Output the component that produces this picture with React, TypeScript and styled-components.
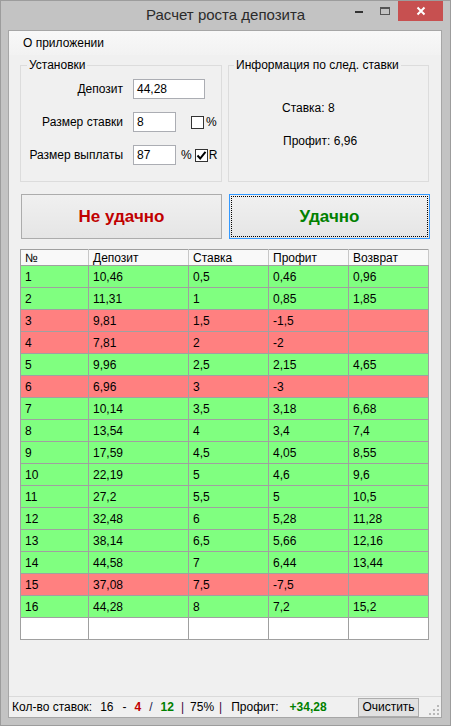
import React from 'react';
import styled, { createGlobalStyle } from 'styled-components';

const GlobalStyle = createGlobalStyle`
  html, body {
    margin: 0;
    padding: 0;
  }
  body {
    font-family: "Liberation Sans", Arial, sans-serif;
    font-size: 12px;
    color: #000;
    background: #c2c2c2;
  }
`;

const Window = styled.div`
  width: 451px;
  height: 726px;
  box-sizing: border-box;
  border: 1px solid #9c9c9c;
  background: #c3c3c3;
  display: flex;
  flex-direction: column;
`;

const TitleBar = styled.div`
  height: 29px;
  display: grid;
  grid-template-columns: 1fr auto 1fr;
  align-items: start;
`;

const Title = styled.div`
  grid-column: 2;
  font-size: 15px;
  color: #2b2b2b;
  line-height: 28px;
`;

const Caption = styled.div`
  grid-column: 3;
  justify-self: end;
  display: flex;
  margin-right: 7px;
`;

const CaptionButton = styled.div<{ $close?: boolean }>`
  width: ${(p) => (p.$close ? 45 : 26)}px;
  height: 20px;
  display: flex;
  align-items: center;
  justify-content: center;
  background: ${(p) => (p.$close ? '#c75050' : 'transparent')};
`;

const Client = styled.div`
  flex: 1;
  min-width: 0;
  margin: 0 8px 7px 7px;
  border: 1px solid #a6a6a6;
  background: #f0f0f0;
  display: flex;
  flex-direction: column;
`;

const MenuBar = styled.div`
  height: 24px;
  background: linear-gradient(#f8f8f8, #f2f2f2);
  padding-left: 14px;
  display: flex;
  align-items: center;
`;

const Body = styled.div`
  flex: 1;
  padding: 3px 0 0 11px;
  display: flex;
  flex-direction: column;
`;

const TopRow = styled.div`
  display: flex;
  gap: 6px;
`;

const Group = styled.fieldset<{ $w: number }>`
  margin: 0;
  width: ${(p) => p.$w}px;
  height: 124px;
  box-sizing: border-box;
  border: 1px solid #dcdcdc;
  padding: 7px 0 0 0;
  display: flex;
  flex-direction: column;
`;

const Legend = styled.legend<{ $ml: number }>`
  font-size: 12px;
  line-height: 14px;
  padding: 0 2px;
  margin-left: ${(p) => p.$ml}px;
  color: #000;
`;

const FieldRow = styled.div`
  display: flex;
  align-items: center;
  height: 20px;
  margin-bottom: 13px;
`;

const FieldLabel = styled.label`
  width: 102px;
  text-align: right;
  margin-right: 10px;
`;

const TextBox = styled.div<{ $w: number }>`
  width: ${(p) => p.$w}px;
  height: 20px;
  box-sizing: border-box;
  border: 1px solid #abadb3;
  background: #fff;
  padding-left: 3px;
  display: flex;
  align-items: center;
`;

const Suffix = styled.span<{ $ml: number }>`
  margin-left: ${(p) => p.$ml}px;
`;

const Check = styled.span<{ $ml: number }>`
  margin-left: ${(p) => p.$ml}px;
  width: 13px;
  height: 13px;
  box-sizing: border-box;
  border: 1px solid #333;
  background: #fff;
  display: inline-flex;
  align-items: center;
  justify-content: center;
`;

const InfoLine = styled.div<{ $mt: number; $ml: number }>`
  margin-top: ${(p) => p.$mt}px;
  margin-left: ${(p) => p.$ml}px;
  line-height: 14px;
`;

const ButtonRow = styled.div`
  display: flex;
  gap: 7px;
  margin: 12px 0 0 1px;
`;

const BigButton = styled.button<{ $color: string; $focused?: boolean }>`
  width: 201px;
  height: 45px;
  box-sizing: border-box;
  border: 1px solid ${(p) => (p.$focused ? '#3399ff' : '#acacac')};
  background: linear-gradient(#f0f0f0, #e5e5e5);
  font-family: "Liberation Sans", Arial, sans-serif;
  font-size: 17px;
  font-weight: bold;
  color: ${(p) => p.$color};
  padding: 0;
  display: flex;
  align-items: center;
  justify-content: center;
  outline: ${(p) => (p.$focused ? '1px dotted #000' : 'none')};
  outline-offset: -3px;
`;

const Grid = styled.table`
  margin-top: 10px;
  width: 409px;
  border-collapse: collapse;
  table-layout: fixed;
  border: 1px solid #a0a0a0;
`;

const HeadCell = styled.th`
  box-sizing: border-box;
  height: 16px;
  padding: 0 0 0 4px;
  text-align: left;
  font-weight: normal;
  background: #f9f9f9;
  border-right: 1px solid #c8c8c8;
  border-bottom: 1px solid #a0a0a0;
  white-space: nowrap;
  overflow: hidden;
`;

const Row = styled.tr<{ $state: 'win' | 'loss' | 'empty' }>`
  height: 22px;
  background: ${(p) =>
    p.$state === 'win' ? '#80ff80' : p.$state === 'loss' ? '#ff8080' : '#fff'};
`;

const Cell = styled.td`
  border: 1px solid #a0a0a0;
  padding: 0 0 0 4px;
  height: 21px;
  box-sizing: border-box;
  white-space: nowrap;
  overflow: hidden;
`;

const StatusBar = styled.div`
  height: 20px;
  border-top: 1px solid #dadada;
  display: flex;
  align-items: center;
  padding-left: 3px;
`;

const StatusText = styled.span<{ $ml?: number; $color?: string; $bold?: boolean }>`
  margin-left: ${(p) => p.$ml ?? 0}px;
  color: ${(p) => p.$color ?? '#000'};
  font-weight: ${(p) => (p.$bold ? 'bold' : 'normal')};
  white-space: nowrap;
`;

const ClearButton = styled.button`
  margin-left: auto;
  width: 61px;
  height: 19px;
  box-sizing: border-box;
  border: 1px solid #adadad;
  background: #e1e1e1;
  font-family: "Liberation Sans", Arial, sans-serif;
  font-size: 12px;
  padding: 0;
  color: #000;
`;

const Grip = styled.svg`
  margin: 6px 1px 0 9px;
`;

const columns = [
  { title: '№', width: 68 },
  { title: 'Депозит', width: 100 },
  { title: 'Ставка', width: 80 },
  { title: 'Профит', width: 80 },
  { title: 'Возврат', width: 80 },
];

const rows: { n: number; dep: string; st: string; pr: string; ret: string; win: boolean }[] = [
  { n: 1, dep: '10,46', st: '0,5', pr: '0,46', ret: '0,96', win: true },
  { n: 2, dep: '11,31', st: '1', pr: '0,85', ret: '1,85', win: true },
  { n: 3, dep: '9,81', st: '1,5', pr: '-1,5', ret: '', win: false },
  { n: 4, dep: '7,81', st: '2', pr: '-2', ret: '', win: false },
  { n: 5, dep: '9,96', st: '2,5', pr: '2,15', ret: '4,65', win: true },
  { n: 6, dep: '6,96', st: '3', pr: '-3', ret: '', win: false },
  { n: 7, dep: '10,14', st: '3,5', pr: '3,18', ret: '6,68', win: true },
  { n: 8, dep: '13,54', st: '4', pr: '3,4', ret: '7,4', win: true },
  { n: 9, dep: '17,59', st: '4,5', pr: '4,05', ret: '8,55', win: true },
  { n: 10, dep: '22,19', st: '5', pr: '4,6', ret: '9,6', win: true },
  { n: 11, dep: '27,2', st: '5,5', pr: '5', ret: '10,5', win: true },
  { n: 12, dep: '32,48', st: '6', pr: '5,28', ret: '11,28', win: true },
  { n: 13, dep: '38,14', st: '6,5', pr: '5,66', ret: '12,16', win: true },
  { n: 14, dep: '44,58', st: '7', pr: '6,44', ret: '13,44', win: true },
  { n: 15, dep: '37,08', st: '7,5', pr: '-7,5', ret: '', win: false },
  { n: 16, dep: '44,28', st: '8', pr: '7,2', ret: '15,2', win: true },
];

export default function App() {
  return (
    <>
      <GlobalStyle />
      <Window>
        <TitleBar>
          <Title>Расчет роста депозита</Title>
          <Caption>
            <CaptionButton>
              <svg width="10" height="10" viewBox="0 0 10 10">
                <rect x="1" y="5" width="8" height="2" fill="#333" />
              </svg>
            </CaptionButton>
            <CaptionButton>
              <svg width="12" height="10" viewBox="0 0 12 10">
                <rect x="1.5" y="1.5" width="9" height="7" fill="none" stroke="#555" />
                <rect x="1" y="1" width="10" height="2" fill="#555" />
              </svg>
            </CaptionButton>
            <CaptionButton $close>
              <svg width="10" height="10" viewBox="0 0 10 10">
                <path d="M1.5 1.5 L8.5 8.5 M8.5 1.5 L1.5 8.5" stroke="#fff" strokeWidth="2" />
              </svg>
            </CaptionButton>
          </Caption>
        </TitleBar>
        <Client>
          <MenuBar>О приложении</MenuBar>
          <Body>
            <TopRow>
              <Group $w={202}>
                <Legend $ml={6}>Установки</Legend>
                <FieldRow>
                  <FieldLabel>Депозит</FieldLabel>
                  <TextBox $w={72}>44,28</TextBox>
                </FieldRow>
                <FieldRow>
                  <FieldLabel>Размер ставки</FieldLabel>
                  <TextBox $w={43}>8</TextBox>
                  <Check $ml={15} />
                  <Suffix $ml={2}>%</Suffix>
                </FieldRow>
                <FieldRow>
                  <FieldLabel>Размер выплаты</FieldLabel>
                  <TextBox $w={43}>87</TextBox>
                  <Suffix $ml={5}>%</Suffix>
                  <Check $ml={3}>
                    <svg width="11" height="11" viewBox="0 0 11 11">
                      <path d="M1.5 5.5 L4.2 8.5 L9.5 1.8" fill="none" stroke="#000" strokeWidth="2" />
                    </svg>
                  </Check>
                  <Suffix $ml={1}>R</Suffix>
                </FieldRow>
              </Group>
              <Group $w={201}>
                <Legend $ml={5}>Информация по след. ставки</Legend>
                <InfoLine $mt={22} $ml={53}>Ставка: 8</InfoLine>
                <InfoLine $mt={19} $ml={54}>Профит: 6,96</InfoLine>
              </Group>
            </TopRow>
            <ButtonRow>
              <BigButton $color="#c00000">Не удачно</BigButton>
              <BigButton $color="#008000" $focused>Удачно</BigButton>
            </ButtonRow>
            <Grid>
              <colgroup>
                {columns.map((c) => (
                  <col key={c.title} style={{ width: c.width }} />
                ))}
              </colgroup>
              <thead>
                <tr>
                  {columns.map((c) => (
                    <HeadCell key={c.title}>{c.title}</HeadCell>
                  ))}
                </tr>
              </thead>
              <tbody>
                {rows.map((r) => (
                  <Row key={r.n} $state={r.win ? 'win' : 'loss'}>
                    <Cell>{r.n}</Cell>
                    <Cell>{r.dep}</Cell>
                    <Cell>{r.st}</Cell>
                    <Cell>{r.pr}</Cell>
                    <Cell>{r.ret}</Cell>
                  </Row>
                ))}
                <Row $state="empty">
                  {columns.map((c) => (
                    <Cell key={c.title} />
                  ))}
                </Row>
              </tbody>
            </Grid>
          </Body>
          <StatusBar>
            <StatusText>Кол-во ставок:</StatusText>
            <StatusText $ml={8}>16</StatusText>
            <StatusText $ml={9}>-</StatusText>
            <StatusText $ml={8} $color="#c00000" $bold>4</StatusText>
            <StatusText $ml={8} $color="#1a1a4d">/</StatusText>
            <StatusText $ml={8} $color="#008000" $bold>12</StatusText>
            <StatusText $ml={7} $color="#400040">|</StatusText>
            <StatusText $ml={6}>75%</StatusText>
            <StatusText $ml={5} $color="#400040">|</StatusText>
            <StatusText $ml={9}>Профит:</StatusText>
            <StatusText $ml={11} $color="#008000" $bold>+34,28</StatusText>
            <ClearButton>Очистить</ClearButton>
            <Grip width="12" height="12" viewBox="0 0 12 12">
              {[
                [9, 1],
                [9, 5],
                [5, 5],
                [9, 9],
                [5, 9],
                [1, 9],
              ].map(([x, y]) => (
                <rect key={`${x}-${y}`} x={x} y={y} width="2" height="2" fill="#b8b8b8" />
              ))}
            </Grip>
          </StatusBar>
        </Client>
      </Window>
    </>
  );
}
